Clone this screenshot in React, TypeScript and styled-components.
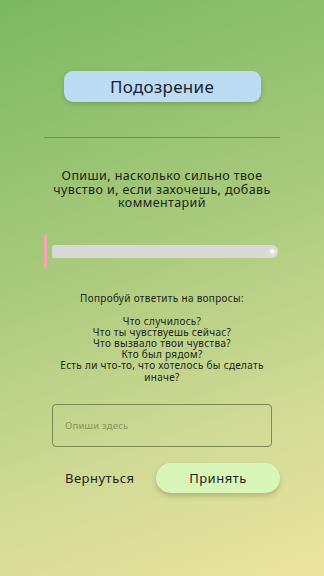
import React from "react";
import styled, { createGlobalStyle } from "styled-components";

const Global = createGlobalStyle`
  html, body { margin: 0; padding: 0; }
  body { width: 324px; height: 576px; overflow: hidden; }
  * { box-sizing: border-box; }
`;

const Screen = styled.div`
  width: 324px;
  height: 576px;
  background: linear-gradient(160deg, #7bb862 0%, #a6c97a 40%, #d2db96 75%, #ece4a0 100%);
  font-family: "Noto Sans", "DejaVu Sans", sans-serif;
  color: #1e2418;
  display: flex;
  flex-direction: column;
  align-items: center;
  padding-top: 71px;
`;

const TitleChip = styled.div`
  width: 197px;
  height: 31px;
  border-radius: 9px;
  background: #bbdcf3;
  box-shadow: 0 2px 4px rgba(40, 70, 30, 0.25);
  display: flex;
  align-items: center;
  justify-content: center;
  font-size: 17px;
  letter-spacing: 0.3px;
  color: #1b2233;
`;

const Divider = styled.hr`
  width: 236px;
  margin: 35px 0 0 0;
  border: none;
  border-top: 1px solid #6f9456;
`;

const Prompt = styled.p`
  margin: 31px 0 0 0;
  width: 224px;
  text-align: center;
  font-size: 12.5px;
  line-height: 13.5px;
  letter-spacing: 0.4px;
  color: #1e2418;
`;

const SliderRow = styled.div`
  margin-top: 25px;
  margin-left: -2px;
  width: 234px;
  height: 33px;
  display: flex;
  align-items: center;
  gap: 5px;
`;

const Thumb = styled.div`
  width: 3px;
  height: 33px;
  border-radius: 1px;
  background: #f0a7b1;
`;

const Track = styled.div`
  position: relative;
  flex: 1;
  height: 13px;
  background: rgba(220, 218, 222, 0.92);
  border-radius: 2px 6px 6px 2px;
`;

const TrackDot = styled.span`
  position: absolute;
  right: 4px;
  top: 5px;
  width: 3px;
  height: 3px;
  border-radius: 50%;
  background: #ffffff;
  box-shadow: 0 0 3px 1px rgba(255, 255, 230, 0.9);
`;

const Hint = styled.div`
  margin-top: 25px;
  width: 232px;
  text-align: center;
  font-size: 10px;
  line-height: 11.2px;
  letter-spacing: 0.3px;
  color: #1e2418;
`;

const HintLine = styled.div<{ $gap?: boolean }>`
  margin-bottom: ${(p) => (p.$gap ? "11.8px" : "0")};
`;

const InputBox = styled.div`
  margin-top: 21px;
  width: 220px;
  height: 43px;
  border: 1px solid #7b8857;
  border-radius: 4px;
  display: flex;
  align-items: center;
  padding-left: 12px;
  font-size: 9.5px;
  letter-spacing: 0.2px;
  color: #879364;
`;

const Actions = styled.div`
  margin-top: 16px;
  margin-left: 21px;
  width: 215px;
  display: flex;
  align-items: center;
  justify-content: space-between;
`;

const BackButton = styled.div`
  font-size: 13px;
  letter-spacing: 0.5px;
  color: #1e2418;
`;

const AcceptButton = styled.div`
  width: 124px;
  height: 30px;
  border-radius: 15px;
  background: #d9f6b9;
  box-shadow: 0 3px 5px rgba(60, 70, 20, 0.25);
  display: flex;
  align-items: center;
  justify-content: center;
  font-size: 13px;
  letter-spacing: 0.5px;
  color: #1e2418;
`;

export default function App() {
  return (
    <>
      <Global />
      <Screen>
        <TitleChip>Подозрение</TitleChip>
        <Divider />
        <Prompt>
          Опиши, насколько сильно твое чувство и, если захочешь, добавь комментарий
        </Prompt>
        <SliderRow>
          <Thumb />
          <Track>
            <TrackDot />
          </Track>
        </SliderRow>
        <Hint>
          <HintLine $gap>Попробуй ответить на вопросы:</HintLine>
          <HintLine>Что случилось?</HintLine>
          <HintLine>Что ты чувствуешь сейчас?</HintLine>
          <HintLine>Что вызвало твои чувства?</HintLine>
          <HintLine>Кто был рядом?</HintLine>
          <HintLine>Есть ли что-то, что хотелось бы сделать иначе?</HintLine>
        </Hint>
        <InputBox>Опиши здесь</InputBox>
        <Actions>
          <BackButton>Вернуться</BackButton>
          <AcceptButton>Принять</AcceptButton>
        </Actions>
      </Screen>
    </>
  );
}
